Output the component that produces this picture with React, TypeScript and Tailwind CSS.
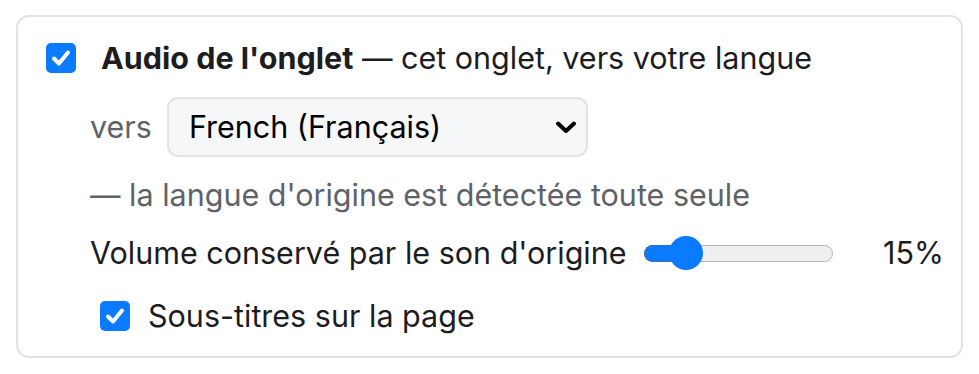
import React from "react";

function Check({ className }: { className: string }) {
  return (
    <span className={`flex items-center justify-center rounded-[5px] bg-[#0a7aff] ${className}`}>
      <svg width="20" height="18" viewBox="0 0 20 18" fill="none">
        <path d="M3 9.5 L8 14.5 L17 3.5" stroke="white" strokeWidth="4" strokeLinecap="round" strokeLinejoin="round" />
      </svg>
    </span>
  );
}

export default function App() {
  return (
    <div className="w-[979px] h-[374px] bg-white pl-[16px] pt-[15px] font-['Inter',sans-serif] text-[30.5px] text-[#1d1d1f]">
      <div className="w-[947px] h-[343px] rounded-[13px] border-2 border-[#e2e2e2] pl-[28px] pr-[19px] pt-[23px]">
        <div className="flex h-[36px] items-center">
          <Check className="h-[30px] w-[30px] shrink-0" />
          <span className="ml-[25px] mb-[1px] leading-[36px] whitespace-nowrap">
            <b className="font-bold">Audio de l'onglet</b> — cet onglet, vers votre langue
          </span>
        </div>
        <div className="ml-[44px] mt-[21px] flex h-[60px] items-center">
          <span className="leading-[36px] text-[#5f6368]">vers</span>
          <div className="ml-[15px] flex h-[60px] w-[421px] items-center justify-between rounded-[11px] border-2 border-[#e3e3e3] bg-[#f6f7f8] pl-[20px] pr-[9px]">
            <span className="leading-[36px] text-black">French (Français)</span>
            <svg width="22" height="13" viewBox="0 0 22 13" fill="none">
              <path d="M3 2.5 L11 10 L19 2.5" stroke="black" strokeWidth="4" strokeLinecap="round" strokeLinejoin="round" />
            </svg>
          </div>
        </div>
        <div className="ml-[44px] mt-[20px] h-[36px] leading-[36px] text-[#5f6368] whitespace-nowrap">
          — la langue d'origine est détectée toute seule
        </div>
        <div className="ml-[44px] mt-[22px] flex h-[36px] items-center">
          <span className="leading-[36px] whitespace-nowrap">Volume conservé par le son d'origine</span>
          <div className="relative ml-[17px] h-[34px] w-[189px] shrink-0">
            <div className="absolute left-0 right-0 top-[8.5px] h-[17px] rounded-full border-[1.5px] border-[#b5b5b5] bg-[#efefef]" />
            <div className="absolute left-0 top-[8.5px] h-[17px] w-[45px] rounded-l-full border-[1.5px] border-r-0 border-[#3f6fb0] bg-[#0a7aff]" />
            <div className="absolute left-[25px] top-0 h-[34px] w-[34px] rounded-full bg-[#0a7aff]" />
          </div>
          <span className="ml-auto mr-[-2px] leading-[36px]">15%</span>
        </div>
        <div className="ml-[54px] mt-[27px] flex h-[36px] items-center">
          <Check className="h-[30px] w-[30px] shrink-0" />
          <span className="ml-[18px] leading-[36px] whitespace-nowrap">Sous-titres sur la page</span>
        </div>
      </div>
    </div>
  );
}
